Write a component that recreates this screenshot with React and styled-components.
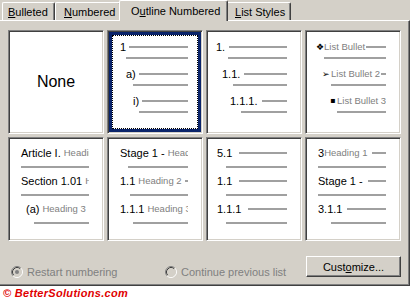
import React from "react"
import styled, { createGlobalStyle } from "styled-components"

const GlobalStyle = createGlobalStyle`
    body {
        margin: 0;
        background: #fff;
        font-family: "Liberation Sans", Arial, sans-serif;
    }
`;

const Dialog = styled.div`
    width: 410px;
    height: 286px;
    background: #d4d0c8;
    display: flex;
    flex-direction: column;
`;

const TabStrip = styled.div`
    display: flex;
    align-items: flex-start;
    height: 20px;
    padding-left: 2px;
    position: relative;
    z-index: 2;
`;

const Tab = styled.div`
    box-sizing: border-box;
    width: ${p => p.$w}px;
    height: ${p => (p.$active ? 21 : 18)}px;
    margin: ${p => (p.$active ? "0 -2px" : "2px 0 0")};
    padding: ${p => (p.$active ? 4 : 3)}px 0 0 ${p => p.$pad}px;
    background: #d4d0c8;
    border-top: 1px solid #fff;
    border-left: 1px solid #fff;
    border-right: 1px solid #404040;
    box-shadow: inset -1px 0 0 #808080;
    border-radius: 2px 2px 0 0;
    font-size: 11px;
    line-height: 13px;
    white-space: nowrap;
    position: relative;
    z-index: ${p => (p.$active ? 2 : 1)};
`;

const Panel = styled.div`
    flex: 1;
    border-top: 1px solid #fff;
    border-right: 1px solid #404040;
    border-bottom: 1px solid #404040;
    box-shadow: inset -1px -1px 0 #808080;
    padding: 9px 8px 0 8px;
`;

const Grid = styled.div`
    display: grid;
    grid-template-columns: repeat(4, 96px);
    grid-auto-rows: 104px;
    gap: 3px;
`;

const Cell = styled.div`
    box-sizing: border-box;
    background: #fff;
    border: 1px solid;
    border-color: #808080 #fff #fff #808080;
    box-shadow: inset 1px 1px 0 #404040, inset -1px -1px 0 #d4d0c8
        ${p => (p.$selected ? ", inset 0 0 0 4px #0a246a" : "")};
    outline: ${p => (p.$selected ? "1px dotted #000" : "none")};
    outline-offset: -6px;
    padding: ${p => p.$top}px 14px 0 1px;
    overflow: hidden;
`;

const NoneCell = styled(Cell)`
    display: flex;
    align-items: center;
    justify-content: center;
    padding: 0;
    font-size: 16px;
`;

const LabelRow = styled.div`
    display: flex;
    align-items: center;
    height: 14px;
    padding-left: ${p => p.$indent}px;
    overflow: hidden;
    white-space: nowrap;
`;

const Black = styled.span`
    flex-shrink: 0;
    font-size: 11px;
    line-height: 14px;
    color: #000;
`;

const Gray = styled.span`
    flex-shrink: 0;
    margin-left: ${p => p.$gap}px;
    font-size: 9.5px;
    line-height: 14px;
    color: #808080;
`;

const Bullet = styled.span`
    flex-shrink: 0;
    width: ${p => p.$w}px;
    font-family: "DejaVu Sans", sans-serif;
    font-size: ${p => p.$size}px;
    font-weight: bold;
    line-height: 14px;
    color: #000;
`;

const Rule = styled.div`
    flex: 1;
    min-width: 0;
    height: 2px;
    margin-left: ${p => p.$gap}px;
    background: #a0a0a0;
`;

const RuleRow = styled.div`
    box-sizing: border-box;
    height: ${p => p.$h}px;
    padding: ${p => p.$top}px 0 0 ${p => p.$indent}px;

    div {
        height: 2px;
        background: #a0a0a0;
    }
`;

const Footer = styled.div`
    display: flex;
    align-items: flex-end;
    height: 21px;
    margin-top: 15px;
`;

const Option = styled.label`
    display: flex;
    align-items: center;
    gap: 4px;
    width: ${p => p.$w}px;
    margin-left: ${p => p.$left}px;
    margin-bottom: -1px;
    font-size: 11px;
    line-height: 12px;
    color: #808080;
    white-space: nowrap;
`;

const Button = styled.div`
    box-sizing: border-box;
    width: 95px;
    height: 21px;
    margin-left: auto;
    display: flex;
    align-items: center;
    justify-content: center;
    border: 1px solid;
    border-color: #fff #404040 #404040 #fff;
    box-shadow: inset -1px -1px 0 #808080;
    font-size: 11px;
`;

const Watermark = styled.div`
    padding: 1px 0 0 3px;
    font-size: 11px;
    line-height: 13px;
    font-weight: bold;
    font-style: italic;
    color: #e00000;
    letter-spacing: 0.3px;
`;

const Radio = ({ checked }) => (
    <svg width="12" height="12" viewBox="0 0 12 12">
        <circle cx="6" cy="6" r="4.5" fill="#d4d0c8" />
        <path d="M2.11 9.89 A5.5 5.5 0 0 1 9.89 2.11" stroke="#808080" fill="none" />
        <path d="M9.89 2.11 A5.5 5.5 0 0 1 2.11 9.89" stroke="#fff" fill="none" />
        <path d="M2.82 9.18 A4.5 4.5 0 0 1 9.18 2.82" stroke="#404040" fill="none" />
        <path d="M9.18 2.82 A4.5 4.5 0 0 1 2.82 9.18" stroke="#d4d0c8" fill="none" />
        {checked && <circle cx="6" cy="6" r="2" fill="#808080" />}
    </svg>
);

const tabs = [
    { w: 53, pad: 5, label: <><u>B</u>ulleted</> },
    { w: 66, pad: 8, label: <><u>N</u>umbered</> },
    { w: 109, pad: 11, active: true, label: <>O<u>u</u>tline Numbered</> },
    { w: 65, pad: 8, label: <><u>L</u>ist Styles</> },
];

const rowOne = { top: 9, ruleH: 13, ruleTop: 3 };
const rowTwo = { top: 8, ruleH: 14, ruleTop: 6 };

const previews = [
    { none: true },
    {
        ...rowOne, selected: true, gap: 3,
        items: [
            { i: 11, black: "1", r: 17 },
            { i: 17, black: "a)", r: 24 },
            { i: 24, black: "i)", r: 30 },
        ],
    },
    {
        ...rowOne, gap: 4,
        items: [
            { i: 8, black: "1.", r: 20 },
            { i: 14, black: "1.1.", r: 25 },
            { i: 22, black: "1.1.1.", r: 33 },
        ],
    },
    {
        ...rowOne, gap: 1,
        items: [
            { i: 9, bullet: "❖", bs: 9, bw: 7, gray: "List Bullet", r: 17 },
            { i: 15, bullet: "➢", bs: 9, bw: 8, gray: "List Bullet 2", r: 24 },
            { i: 23, bullet: "▪", bs: 8, bw: 6, gray: "List Bullet 3", r: 30 },
        ],
    },
    {
        ...rowTwo, gap: 3,
        items: [
            { i: 11, black: "Article I.", gray: "Heading 1", r: 11 },
            { i: 11, black: "Section 1.01", gray: "Heading 2", r: 11 },
            { i: 16, black: "(a)", gray: "Heading 3", r: 24 },
        ],
    },
    {
        ...rowTwo, gap: 3,
        items: [
            { i: 11, black: "Stage 1 - ", gray: "Heading 1", r: 19 },
            { i: 11, black: "1.1", gray: "Heading 2", r: 21 },
            { i: 11, black: "1.1.1", gray: "Heading 3", r: 24 },
        ],
    },
    {
        ...rowTwo, gap: 7,
        items: [
            { i: 9, black: "5.1", r: 18 },
            { i: 9, black: "1.1", r: 18 },
            { i: 9, black: "1.1.1", r: 18 },
        ],
    },
    {
        ...rowTwo, gap: 5,
        items: [
            { i: 11, black: "3", gray: "Heading 1", grayGap: 0, r: 11 },
            { i: 11, black: "Stage 1 -", r: 11 },
            { i: 11, black: "3.1.1", r: 24 },
        ],
    },
];

const Preview = ({ p }) => {
    if (p.none) return <NoneCell>None</NoneCell>;
    return (
        <Cell $top={p.top} $selected={p.selected}>
            {p.items.map((it, n) => (
                <div key={n}>
                    <LabelRow $indent={it.i}>
                        {it.bullet && (
                            <Bullet $size={it.bs} $w={it.bw}>{it.bullet}</Bullet>
                        )}
                        {it.black && <Black>{it.black}</Black>}
                        {it.gray && (
                            <Gray $gap={it.grayGap ?? (it.bullet ? 1 : 3)}>
                                {it.gray}
                            </Gray>
                        )}
                        <Rule $gap={p.gap} />
                    </LabelRow>
                    <RuleRow $h={p.ruleH} $top={p.ruleTop} $indent={it.r}>
                        <div />
                    </RuleRow>
                </div>
            ))}
        </Cell>
    );
};

const App = () => (
    <>
        <GlobalStyle />
        <Dialog>
            <TabStrip>
                {tabs.map((t, n) => (
                    <Tab key={n} $w={t.w} $pad={t.pad} $active={t.active}>
                        {t.label}
                    </Tab>
                ))}
            </TabStrip>
            <Panel>
                <Grid>
                    {previews.map((p, n) => (
                        <Preview key={n} p={p} />
                    ))}
                </Grid>
                <Footer>
                    <Option $w={154} $left={3}>
                        <Radio checked />
                        Restart numbering
                    </Option>
                    <Option $w={130} $left={0}>
                        <Radio />
                        Continue previous list
                    </Option>
                    <Button>
                        <span>Cust<u>o</u>mize...</span>
                    </Button>
                </Footer>
            </Panel>
        </Dialog>
        <Watermark>© BetterSolutions.com</Watermark>
    </>
);

export default App;
